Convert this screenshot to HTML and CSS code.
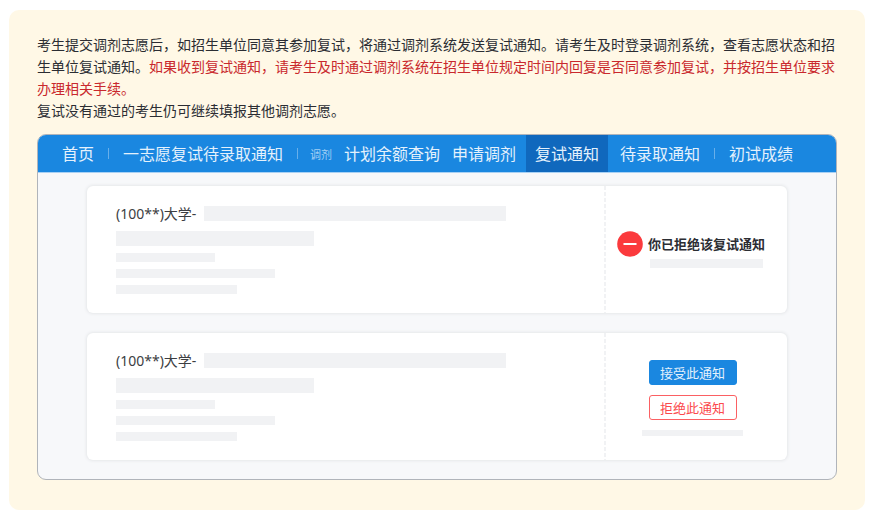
FILE: index.html
```html
<!DOCTYPE html>
<html lang="zh-CN">
<head>
<meta charset="utf-8">
<meta name="viewport" content="width=device-width, initial-scale=1">
<title>复试通知</title>
<link rel="stylesheet" href="styles.css">
</head>
<body>
<main class="panel">
  <p class="note">考生提交调剂志愿后，如招生单位同意其参加复试，将通过调剂系统发送复试通知。请考生及时登录调剂系统，查看志愿状态和招生单位复试通知。<span class="warn">如果收到复试通知，请考生及时通过调剂系统在招生单位规定时间内回复是否同意参加复试，并按招生单位要求办理相关手续。</span></p>
  <p class="note">复试没有通过的考生仍可继续填报其他调剂志愿。</p>
  <section class="frame">
    <nav class="nav">
      <a class="link" href="#">首页</a>
      <span class="divider"></span>
      <a class="link" href="#">一志愿复试待录取通知</a>
      <span class="divider"></span>
      <span class="group">调剂</span>
      <a class="link compact" href="#">计划余额查询</a>
      <a class="link compact" href="#">申请调剂</a>
      <a class="link active" href="#" aria-current="page">复试通知</a>
      <a class="link" href="#">待录取通知</a>
      <span class="divider"></span>
      <a class="link" href="#">初试成绩</a>
    </nav>
    <div class="cards">
      <article class="card">
        <div class="info">
          <div class="head"><h2 class="title">(100**)大学-</h2><span class="bar thick grow"></span></div>
          <span class="bar thick w-l"></span>
          <span class="bar w-s"></span>
          <span class="bar w-m"></span>
          <span class="bar w-n"></span>
        </div>
        <div class="side status">
          <svg class="icon" viewBox="0 0 26 26" aria-hidden="true"><circle cx="13" cy="13" r="12.8" fill="#fb3a3d"/><path d="M6.5 13h13" stroke="#fff" stroke-width="2"/></svg>
          <div class="message">
            <strong class="state">你已拒绝该复试通知</strong>
            <span class="bar w-status"></span>
          </div>
        </div>
      </article>
      <article class="card">
        <div class="info">
          <div class="head"><h2 class="title">(100**)大学-</h2><span class="bar thick grow"></span></div>
          <span class="bar thick w-l"></span>
          <span class="bar w-s"></span>
          <span class="bar w-m"></span>
          <span class="bar w-n"></span>
        </div>
        <div class="side actions">
          <button class="button accept" type="button">接受此通知</button>
          <button class="button reject" type="button">拒绝此通知</button>
          <span class="bar thin w-action"></span>
        </div>
      </article>
    </div>
  </section>
</main>
</body>
</html>
```
FILE: styles.css
```css
* {
  box-sizing: border-box;
}

body {
  margin: 10px 11px 10px 9px;
  background: #fff;
  color: #2b2d33;
  font-family: "Noto Sans", "Noto Sans CJK SC", sans-serif;
  font-size: 14px;
}

.panel {
  padding: 23px 28px 30px;
  border-radius: 10px;
  background: #fff8e6;
}

.note {
  margin: 0;
  font-family: "Noto Sans CJK SC", sans-serif;
  line-height: 22px;
}

.warn {
  color: #c9282d;
}

.frame {
  margin-top: 13px;
  overflow: hidden;
  border: 1px solid #b0b4ba;
  border-radius: 9px;
  background: #f7f8fa;
}

.nav {
  display: flex;
  align-items: center;
  height: 38px;
  padding-left: 12px;
  overflow: hidden;
  border-bottom: 1px solid #a9d1f4;
  background: #1a87e0;
  white-space: nowrap;
}

.link {
  padding: 0 12px;
  color: #e4f1fc;
  font-size: 16px;
  line-height: 38px;
  text-decoration: none;
}

.link.compact {
  padding: 0 0 0 12px;
}

.link.active {
  margin-left: 10px;
  padding: 0 9px;
  background: #1068bd;
}

.divider {
  width: 1px;
  height: 11px;
  margin: 0 2px;
  background: #68afea;
}

.group {
  margin-left: 10px;
  color: #a3cff4;
  font-size: 11px;
}

.cards {
  display: grid;
  gap: 20px;
  padding: 13px 49px 19px;
}

.card {
  display: flex;
  min-height: 127px;
  border-radius: 6px;
  background: #fff;
  box-shadow: 0 0 3px 1px #e6e8ea;
}

.info {
  display: flex;
  flex: 1;
  flex-direction: column;
  gap: 7px;
  padding: 17px 98px 18px 29px;
}

.head {
  display: flex;
  align-items: center;
  gap: 8px;
  height: 21px;
}

.title {
  margin: 0;
  color: #3c3e42;
  font-size: 14px;
  font-weight: 400;
  line-height: 20px;
  white-space: nowrap;
}

.bar {
  display: block;
  height: 9px;
  background: #f1f2f4;
}

.bar.thick {
  height: 15px;
}

.bar.thin {
  height: 6px;
}

.grow {
  flex: 1;
}

.w-l {
  width: 198px;
}

.w-s {
  width: 99px;
}

.w-m {
  width: 159px;
}

.w-n {
  width: 121px;
}

.w-status {
  width: 113px;
  margin-left: 2px;
}

.w-action {
  width: 101px;
}

.side {
  flex: 0 0 183px;
  background: repeating-linear-gradient(#f1f2f4 0 4px, #fff 4px 6px) 0 0 / 2px 100% no-repeat;
}

.status {
  display: flex;
  align-items: flex-start;
  gap: 5px;
  padding: 45px 0 0 13px;
}

.icon {
  width: 26px;
  height: 26px;
}

.message {
  display: grid;
  gap: 2px;
}

.state {
  font-size: 13px;
  line-height: 26px;
  white-space: nowrap;
}

.actions {
  display: flex;
  flex-direction: column;
  align-items: center;
  gap: 10px;
  padding: 27px 6px 0 0;
}

.button {
  width: 88px;
  height: 25px;
  padding: 0;
  border: 1px solid #1a87e0;
  border-radius: 3px;
  font: 13px/23px "Noto Sans CJK SC", sans-serif;
}

.accept {
  background: #1a87e0;
  color: #e4f1fc;
}

.reject {
  border-color: #fb6063;
  background: #fff;
  color: #fb4a4d;
}
```
